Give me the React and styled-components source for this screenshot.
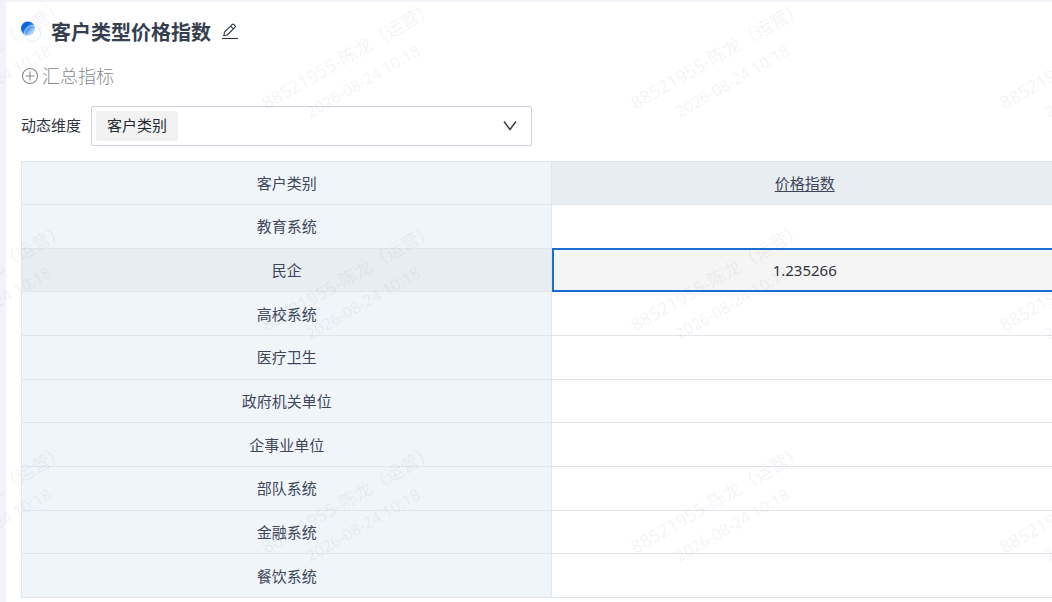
import React from "react";
import styled, { createGlobalStyle } from "styled-components";

const GlobalStyle = createGlobalStyle`
  *, *::before, *::after { box-sizing: border-box; }
  html { height: 100%; }
  body {
    height: 100%;
    margin: 0;
    overflow: hidden;
    background: #f2f3f8;
    color: #303641;
    font: 15px/22px "Noto Sans", "Noto Sans CJK SC", sans-serif;
  }
  #root { height: 100%; }
`;

const Page = styled.div`
  position: relative;
  min-height: 100%;
  padding: 2px 0 0 6px;
  display: flex;
  overflow: hidden;
`;

const Panel = styled.main`
  flex: 1;
  min-width: 0;
  padding: 16px 0 0 15px;
  background: #fff;
`;

const TitleBar = styled.header`
  display: flex;
  align-items: center;
  height: 28px;
`;

const Title = styled.h1`
  margin: 0 11px 0 10px;
  font: 700 20px/28px "Noto Sans CJK SC", sans-serif;
  color: #363f50;
`;

const IconButton = styled.button`
  display: flex;
  padding: 0;
  border: 0;
  background: none;
  color: #303641;
`;

const SummaryButton = styled.button`
  display: flex;
  align-items: center;
  gap: 3px;
  height: 28px;
  margin-top: 16px;
  padding: 0;
  border: 0;
  background: none;
  color: #858a91;
  font: 300 18px/26px "Noto Sans CJK SC", sans-serif;
`;

const SummaryText = styled.span`
  padding-bottom: 2px;
`;

const Filter = styled.div`
  display: flex;
  align-items: center;
  gap: 10px;
  margin: 16px 0 15px;
`;

const FilterLabel = styled.label`
  padding-bottom: 2px;
  font: 15px/22px "Noto Sans CJK SC", sans-serif;
`;

const SelectBox = styled.div`
  display: grid;
  align-items: center;
  flex: 0 1 441px;
  height: 40px;
  border: 1px solid #ccd2de;
  border-radius: 2px;

  > * { grid-area: 1 / 1; }
  > svg { justify-self: end; margin-right: 14px; pointer-events: none; }
`;

const Select = styled.select`
  appearance: none;
  justify-self: start;
  width: 82px;
  height: 30px;
  margin-left: 4px;
  padding: 0 11px 2px;
  border: 0;
  border-radius: 3px;
  background: #f2f2f2;
  color: #262b33;
  font: 15px/22px "Noto Sans CJK SC", sans-serif;
`;

const Table = styled.table`
  width: calc(100% + 6px);
  height: 437px;
  table-layout: fixed;
  border-collapse: collapse;
`;

const HeadRow = styled.tr`
  height: 43px;
`;

const Cell = styled.td`
  padding: 0;
  border: 1px solid #e0e5ee;
  text-align: center;
  color: #303438;
  background: ${(p) => (p.$active ? "#f5f5f5" : "#fff")};
  ${(p) => p.$active && "outline: 2px solid #1b6dd1; outline-offset: -2px;"}
`;

const HeadCell = styled.th`
  width: ${(p) => p.$width || "auto"};
  padding: 0;
  border: 1px solid #e0e5ee;
  font: 400 15px/22px "Noto Sans CJK SC", sans-serif;
  color: #40465a;
  background: ${(p) => (p.$active ? "#e8edf1" : "#f0f5fa")};
`;

const MetricLink = styled.a`
  color: inherit;
  text-decoration: underline;
  text-underline-offset: 2px;
`;

const Watermarks = styled.div`
  position: absolute;
  inset: 0 -230px 0 -198px;
  display: grid;
  grid-template-columns: repeat(auto-fill, 369px);
  grid-auto-rows: 222px;
  align-content: start;
  pointer-events: none;
`;

const Watermark = styled.div`
  display: flex;
  flex-direction: column;
  align-items: center;
  height: 136px;
  justify-content: center;
  transform: rotate(-30deg);
  color: rgba(70, 80, 95, 0.08);
  font: 18px/30px "Noto Sans", "Noto Sans CJK SC", sans-serif;
  white-space: nowrap;
`;

const WatermarkTime = styled.span`
  font-size: 16px;
`;

const rows = [
  ["教育系统", ""],
  ["民企", "1.235266"],
  ["高校系统", ""],
  ["医疗卫生", ""],
  ["政府机关单位", ""],
  ["企事业单位", ""],
  ["部队系统", ""],
  ["金融系统", ""],
  ["餐饮系统", ""],
];

function Logo() {
  return (
    <svg width="20" height="22" viewBox="0 0 20 22" aria-hidden="true">
      <defs>
        <linearGradient id="blue" x1="0" y1="0" x2="1" y2="1">
          <stop offset="0.3" stopColor="#0a62e2" />
          <stop offset="0.55" stopColor="#3b8ef2" />
          <stop offset="0.88" stopColor="#d5e9ff" />
        </linearGradient>
      </defs>
      <circle cx="7" cy="7.500" r="7" fill="url(#blue)" />
      <circle cx="11.500" cy="12.500" r="8" fill="#fff" fillOpacity="0.15" stroke="#cfe4ff" strokeWidth="0.800" />
    </svg>
  );
}

function EditIcon() {
  return (
    <svg width="16" height="18" viewBox="0 0 16 18" fill="none" stroke="currentColor" strokeWidth="1.100" strokeLinejoin="round" aria-hidden="true">
      <path d="M1.800 12.800 2.500 9.200 10.300 1.400Q11 .8 11.700 1.400L13.100 2.800Q13.700 3.500 13.100 4.200L5.300 12ZM8.600 3.200l2.700 2.700" />
      <path d="M0 15.500h16" />
    </svg>
  );
}

function PlusIcon() {
  return (
    <svg width="18" height="18" viewBox="0 0 18 18" fill="none" stroke="currentColor" strokeWidth="1.100" aria-hidden="true">
      <circle cx="9" cy="9" r="7.500" />
      <path d="M9 4.500v9M4.500 9h9" />
    </svg>
  );
}

function ArrowIcon() {
  return (
    <svg width="14" height="10" viewBox="0 0 14 10" fill="none" stroke="#353b45" strokeWidth="1.400" aria-hidden="true">
      <path d="M1 .5l6 8 6-8" />
    </svg>
  );
}

export default function App() {
  return (
    <Page>
      <GlobalStyle />
      <Panel>
        <TitleBar>
          <Logo />
          <Title>客户类型价格指数</Title>
          <IconButton type="button" aria-label="编辑"><EditIcon /></IconButton>
        </TitleBar>
        <SummaryButton type="button">
          <PlusIcon />
          <SummaryText>汇总指标</SummaryText>
        </SummaryButton>
        <Filter>
          <FilterLabel htmlFor="dimension">动态维度</FilterLabel>
          <SelectBox>
            <Select id="dimension"><option>客户类别</option></Select>
            <ArrowIcon />
          </SelectBox>
        </Filter>
        <Table>
          <thead>
            <HeadRow>
              <HeadCell scope="col" $width="51.2%">客户类别</HeadCell>
              <HeadCell scope="col" $active><MetricLink href="#price">价格指数</MetricLink></HeadCell>
            </HeadRow>
          </thead>
          <tbody>
            {rows.map(([name, value]) => (
              <tr key={name}>
                <HeadCell scope="row" $active={!!value}>{name}</HeadCell>
                <Cell $active={!!value}>{value}</Cell>
              </tr>
            ))}
          </tbody>
        </Table>
      </Panel>
      <Watermarks aria-hidden="true">
        {Array.from({ length: 12 }, (_, i) => (
          <Watermark key={i}>
            <span>88521955-陈龙（运营）</span>
            <WatermarkTime>2026-08-24 10:18</WatermarkTime>
          </Watermark>
        ))}
      </Watermarks>
    </Page>
  );
}
